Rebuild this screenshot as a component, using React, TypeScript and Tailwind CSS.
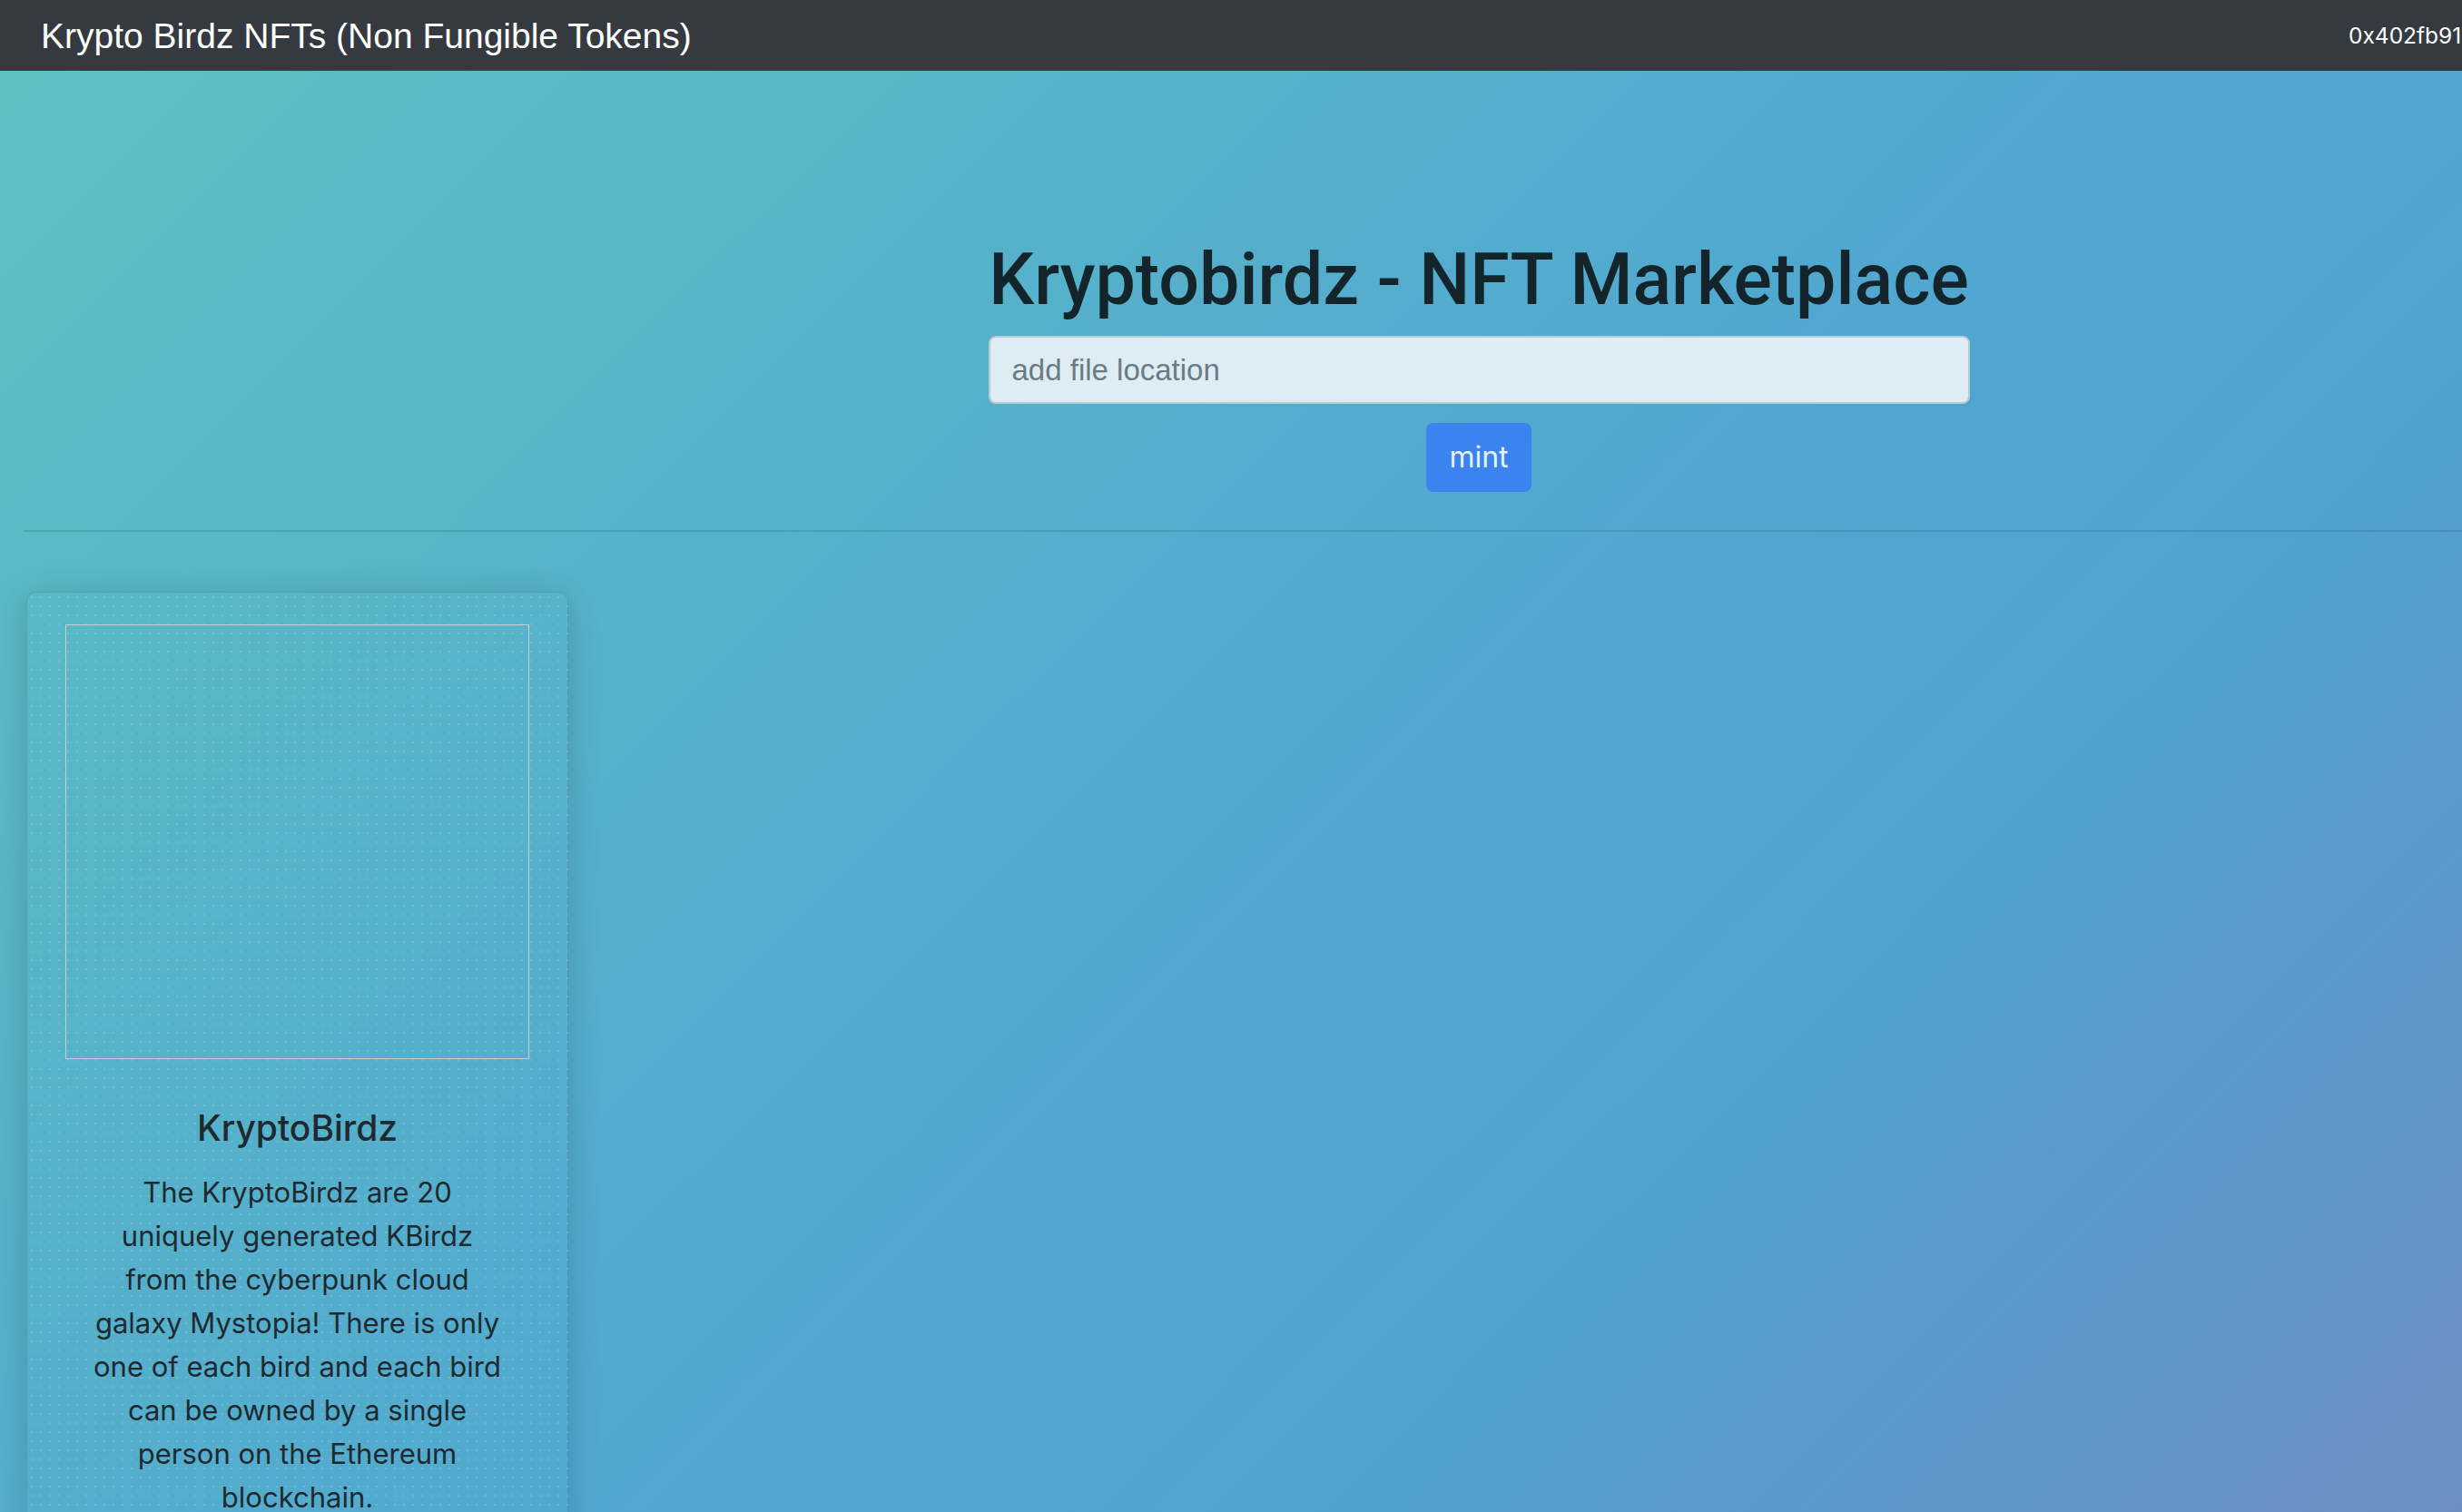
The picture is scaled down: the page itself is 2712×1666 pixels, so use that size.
import { useState } from "react";

const account = "0x402fb91e3F5c8a7D2b6c4E9f1A0d3B7c5E8a2F46";

const description =
  "The KryptoBirdz are 20 uniquely generated KBirdz from the cyberpunk cloud galaxy Mystopia! There is only one of each bird and each bird can be owned by a single person on the Ethereum blockchain.";

export default function App() {
  const [fileUrl, setFileUrl] = useState("");

  return (
    <div className="h-screen w-screen overflow-hidden bg-[linear-gradient(135deg,#5ec1c2_0%,#51a8cf_52%,#4fa1d2_72%,#6b8ebf_100%)]">
      {/* Navbar */}
      <nav className="flex h-[78px] items-center bg-[#343a40] pl-[45px]">
        <span className="text-[39px] leading-none text-white [font-family:'Liberation_Sans',Arial,sans-serif]">
          Krypto Birdz NFTs (Non Fungible Tokens)
        </span>
        <div className="flex-1" />
        <div className="w-[125px] shrink-0 overflow-hidden whitespace-nowrap">
          <small className="text-[24.5px] text-white [font-family:Inter,sans-serif]">{account}</small>
        </div>
      </nav>

      {/* Mint form */}
      <div className="flex flex-col items-center pl-[546px] pt-[183px]">
        <h1 className="text-[79px] leading-[94px] font-medium text-[#13252b] [font-family:Roboto,sans-serif]">
          Kryptobirdz - NFT Marketplace
        </h1>
        <input
          value={fileUrl}
          onChange={(e) => setFileUrl(e.target.value)}
          placeholder="add file location"
          className="mt-[15px] h-[75px] w-[1081px] rounded-[8px] border-2 border-[#b8cad3] bg-[#deedf3] px-[24px] text-[33px] text-[#2b3a40] placeholder-[#6b7b83] outline-none [font-family:'Liberation_Sans',Arial,sans-serif]"
        />
        <button className="mt-[21px] h-[76px] w-[116px] rounded-[8px] bg-[#3b83ee] text-[32px] text-[#e8f2fb] [font-family:Inter,sans-serif]">
          mint
        </button>
      </div>

      <hr className="mt-[42px] ml-[26px] h-[2px] border-0 bg-black/10" />

      {/* Cards */}
      <div className="flex pl-[29px] pt-[66px]">
        <div className="w-[597px] rounded-[10px] border border-black/10 bg-[radial-gradient(rgba(255,255,255,0.13)_1.2px,transparent_1.6px)] [background-size:10px_10px] shadow-[0_4px_36px_rgba(0,0,0,0.16)]">
          <div className="mx-[42px] mt-[35px] h-[479px] border border-[#c6ced2]" />
          <div className="flex flex-col items-center px-[40px] pb-[40px] text-center text-[#1e2a30] [font-family:Inter,sans-serif]">
            <h5 className="mt-[52px] text-[39px] leading-[47px] font-medium">KryptoBirdz</h5>
            <p className="mt-[24px] max-w-[456px] text-[31px] leading-[48px]">{description}</p>
          </div>
        </div>
      </div>
    </div>
  );
}
